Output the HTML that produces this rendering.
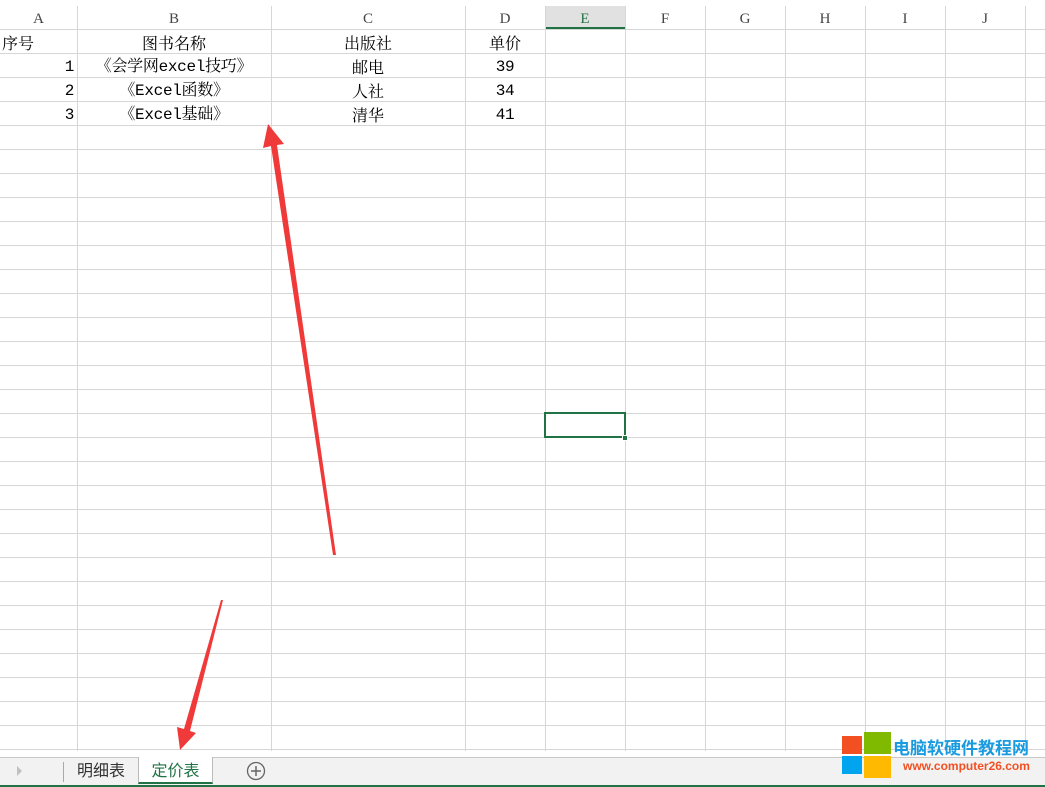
<!DOCTYPE html>
<html><head><meta charset="utf-8"><style>
*{margin:0;padding:0;box-sizing:border-box}
body{width:1045px;height:787px;overflow:hidden;background:#fff;position:relative;font-family:"Liberation Serif","Noto Serif CJK SC","Noto Sans CJK SC",serif;color:#000}
.grid{position:absolute;left:0;top:29px;width:1045px;height:722px;background:repeating-linear-gradient(to bottom,#d6d6d6 0,#d6d6d6 1px,transparent 1px,transparent 24px)}
.v{position:absolute;top:6px;width:1px;height:745px;background:#d6d6d6}
.h{position:absolute;top:6px;height:23px;line-height:26px;text-align:center;font-size:15px;color:#444}
.c{position:absolute;height:24px;line-height:26px;font-size:16px;font-family:"Liberation Mono","Noto Serif CJK SC",serif;letter-spacing:-0.3px}
.cj{font-family:"Noto Serif CJK SC","Noto Sans CJK SC",serif;letter-spacing:0}
</style></head><body>
<div class="grid"></div>
<div style="position:absolute;left:545px;top:6px;width:80px;height:23px;background:#e1e1e1;border-bottom:2px solid #217346"></div>
<div class="v" style="left:77px"></div><div class="v" style="left:271px"></div><div class="v" style="left:465px"></div><div class="v" style="left:545px"></div><div class="v" style="left:625px"></div><div class="v" style="left:705px"></div><div class="v" style="left:785px"></div><div class="v" style="left:865px"></div><div class="v" style="left:945px"></div><div class="v" style="left:1025px"></div>
<div class="h" style="left:0;width:77px">A</div>
<div class="h" style="left:77px;width:194px">B</div>
<div class="h" style="left:271px;width:194px">C</div>
<div class="h" style="left:465px;width:80px">D</div>
<div class="h" style="left:545px;width:80px;color:#217346">E</div>
<div class="h" style="left:625px;width:80px">F</div>
<div class="h" style="left:705px;width:80px">G</div>
<div class="h" style="left:785px;width:80px">H</div>
<div class="h" style="left:865px;width:80px">I</div>
<div class="h" style="left:945px;width:80px">J</div>

<div class="c cj" style="left:2px;top:30px">序号</div>
<div class="c cj" style="left:77px;width:194px;top:30px;text-align:center">图书名称</div>
<div class="c cj" style="left:271px;width:194px;top:30px;text-align:center">出版社</div>
<div class="c cj" style="left:465px;width:80px;top:30px;text-align:center">单价</div>

<div class="c" style="left:0;width:74px;top:54px;text-align:right">1</div>
<div class="c" style="left:77px;width:194px;top:54px;text-align:center">《会学网excel技巧》</div>
<div class="c cj" style="left:271px;width:194px;top:54px;text-align:center">邮电</div>
<div class="c" style="left:465px;width:80px;top:54px;text-align:center">39</div>

<div class="c" style="left:0;width:74px;top:78px;text-align:right">2</div>
<div class="c" style="left:77px;width:194px;top:78px;text-align:center">《Excel函数》</div>
<div class="c cj" style="left:271px;width:194px;top:78px;text-align:center">人社</div>
<div class="c" style="left:465px;width:80px;top:78px;text-align:center">34</div>

<div class="c" style="left:0;width:74px;top:102px;text-align:right">3</div>
<div class="c" style="left:77px;width:194px;top:102px;text-align:center">《Excel基础》</div>
<div class="c cj" style="left:271px;width:194px;top:102px;text-align:center">清华</div>
<div class="c" style="left:465px;width:80px;top:102px;text-align:center">41</div>

<div style="position:absolute;left:544px;top:412px;width:82px;height:26px;border:2px solid #217346"></div>
<div style="position:absolute;left:622px;top:435px;width:6px;height:6px;background:#217346;border:1px solid #fff"></div>

<div style="position:absolute;left:0;top:757px;width:1045px;height:30px;background:#f2f2f2;border-top:1px solid #c8c8c8"></div>
<div style="position:absolute;left:0;top:785px;width:1045px;height:2px;background:#217346"></div>
<div style="position:absolute;left:17px;top:766px;width:0;height:0;border-left:5px solid #c0c0c0;border-top:5px solid transparent;border-bottom:5px solid transparent"></div>
<div style="position:absolute;left:63px;top:762px;width:1px;height:20px;background:#aaa"></div>
<div class="cj" style="position:absolute;left:64px;top:757px;width:74px;height:26px;line-height:24px;text-align:center;font-size:16px;color:#333;font-family:'Noto Sans CJK SC',sans-serif">明细表</div>
<div style="position:absolute;left:138px;top:757px;width:75px;height:27px;line-height:24px;text-align:center;font-size:16px;color:#217346;background:#fff;border-left:1px solid #bbb;border-right:1px solid #bbb;border-bottom:2px solid #217346;font-family:'Noto Sans CJK SC',sans-serif">定价表</div>
<svg style="position:absolute;left:246px;top:761px" width="20" height="20"><circle cx="10" cy="10" r="8.5" fill="none" stroke="#666" stroke-width="1.3"/><path d="M10 5v10M5 10h10" stroke="#666" stroke-width="1.5"/></svg>

<svg style="position:absolute;left:0;top:0" width="1045" height="787">
<polygon points="268,124 263,148 271,146 333,555 336,555 277,145 284,144" fill="#f03a3a"/>
<polygon points="180,750 177,727 184,729 221,600 223,600 190,731 196,733" fill="#f03a3a"/>
</svg>

<div style="position:absolute;left:840px;top:731px;width:60px;height:50px">
<div style="position:absolute;left:2px;top:5px;width:20px;height:18px;background:#f25022"></div>
<div style="position:absolute;left:24px;top:1px;width:27px;height:22px;background:#7fba00"></div>
<div style="position:absolute;left:2px;top:25px;width:20px;height:18px;background:#00a4ef"></div>
<div style="position:absolute;left:24px;top:25px;width:27px;height:22px;background:#ffb900"></div>
</div>
<div style="position:absolute;left:893px;top:734px;font-family:'Noto Sans CJK SC',sans-serif;font-weight:bold;font-size:17px;color:#1a9be0">电脑软硬件教程网</div>
<div style="position:absolute;left:903px;top:759px;font-family:'Liberation Sans',sans-serif;font-weight:bold;font-size:12px;color:#f25022">www.computer26.com</div>
</body></html>
